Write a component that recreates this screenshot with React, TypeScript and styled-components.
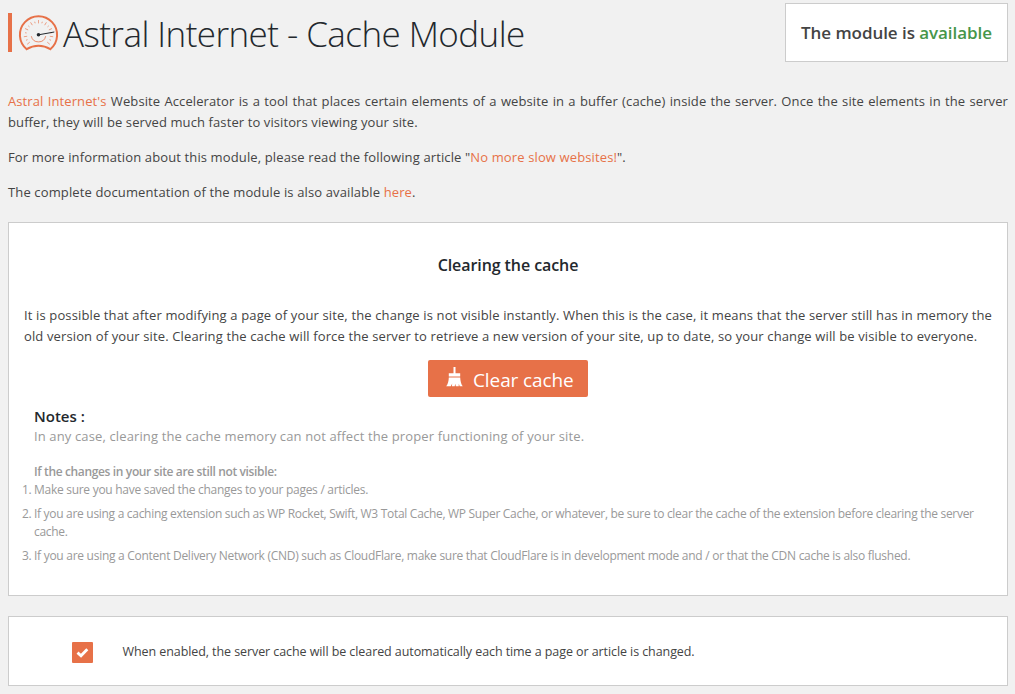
import React from "react";
import styled, { createGlobalStyle } from "styled-components";

const accent = "#e77148";

const GlobalStyle = createGlobalStyle`
  * { box-sizing: border-box; }
  body {
    margin: 0;
    background: #f1f1f1;
    color: #444;
    font-family: "Open Sans", "Noto Sans", sans-serif;
    font-size: 13px;
    line-height: 21px;
    overflow: hidden;
  }
  p, h1, h2, h3, ol { margin: 0; }
`;

const Page = styled.main`
  padding: 3px 7px 0 8px;
`;

const Header = styled.header`
  display: flex;
  justify-content: space-between;
  align-items: flex-start;
  height: 88px;
`;

const Brand = styled.div`
  display: flex;
  align-items: center;
  margin-top: 10px;
  height: 39px;
  border-left: 4px solid ${accent};
  padding-left: 6px;
`;

const Title = styled.h1`
  margin: 3px 0 0 4px;
  font-size: 35px;
  font-weight: 300;
  line-height: 40px;
  letter-spacing: -0.56px;
  color: #23282d;
  white-space: nowrap;
`;

const Status = styled.div`
  width: 223px;
  height: 59px;
  border: 1px solid #ccc;
  background: #fff;
  font-size: 17px;
  font-weight: 600;
  line-height: 57px;
  letter-spacing: -0.06px;
  text-align: center;
  white-space: nowrap;
`;

const Available = styled.span`
  color: #46964a;
`;

const Link = styled.a`
  color: ${accent};
`;

const Intro = styled.section`
  display: flex;
  flex-direction: column;
  gap: 14px;
`;

const Line = styled.span<{ $spacing?: number; $justify?: boolean }>`
  display: block;
  white-space: ${(p) => (p.$justify ? "normal" : "nowrap")};
  text-align-last: ${(p) => (p.$justify ? "justify" : "left")};
  letter-spacing: ${(p) => p.$spacing ?? 0}px;
`;

const Card = styled.section`
  border: 1px solid #ccc;
  background: #fff;
`;

const CachePanel = styled(Card)`
  display: flex;
  flex-direction: column;
  height: 374px;
  margin-top: 19px;
  padding: 32px 15px 0;
`;

const PanelTitle = styled.h2`
  margin-bottom: 29px;
  font-size: 16px;
  font-weight: 600;
  line-height: 21px;
  letter-spacing: -0.08px;
  color: #23282d;
  text-align: center;
`;

const ClearButton = styled.button`
  display: flex;
  align-items: center;
  align-self: center;
  width: 160px;
  height: 37px;
  margin-top: 13px;
  padding: 2px 0 0 18px;
  border: 0;
  border-radius: 2px;
  background: ${accent};
  color: #fff;
  font-family: inherit;
  font-size: 19px;
  line-height: 34px;
  letter-spacing: -0.1px;
  white-space: nowrap;

  svg {
    margin-bottom: 5px;
  }
`;

const ButtonLabel = styled.span`
  margin-left: 10px;
`;

const Notes = styled.div`
  margin: 9px 0 0 10px;
  color: #999;
`;

const NotesTitle = styled.h3`
  font-size: 15px;
  font-weight: 600;
  line-height: 20px;
  color: #23282d;
`;

const NotesHint = styled.p`
  margin-top: 15px;
  font-size: 12px;
  font-weight: 600;
  line-height: 19px;
`;

const Steps = styled.ol`
  display: flex;
  flex-direction: column;
  gap: 6px;
  padding: 0;
  list-style: none;
  font-size: 12px;
  line-height: 18px;
`;

const Step = styled.li`
  display: flex;
  margin-left: -12px;
`;

const StepNumber = styled.span`
  flex: none;
  width: 12px;
  letter-spacing: -0.4px;
`;

const OptionPanel = styled(Card)`
  display: flex;
  align-items: center;
  height: 70px;
  margin-top: 20px;
  padding-left: 63px;
  font-size: 12.5px;
`;

const Checkbox = styled.span`
  display: flex;
  align-items: center;
  justify-content: center;
  width: 21px;
  height: 21px;
  margin: 3px 29.5px 0 0;
  border-radius: 1px;
  background: ${accent};
`;

const ticks = Array.from({ length: 17 }, (_, i) => -130 + i * 16.25);

function Gauge() {
  return (
    <svg width="41" height="42" viewBox="0 -2 41 42" fill="none">
      <path
        d="M8.7 35.2A18.6 18.6 0 1 1 32.3 35.2C25 30.6 16 30.6 8.7 35.2Z"
        stroke={accent}
        strokeWidth="2"
        strokeLinejoin="miter"
      />
      {ticks.map((a, i) => (
        <path
          key={a}
          d={i % 2 ? "M20.5 7.2v1.6" : "M20.5 6v3.4"}
          stroke={accent}
          strokeWidth=".8"
          opacity=".75"
          transform={`rotate(${a} 20.5 20.8)`}
        />
      ))}
      <path d="M13.3 22.2A7.4 7.4 0 0 0 27.7 22.2" stroke={accent} strokeWidth="1" opacity=".8" />
      <path d="M20.5 20.8 36.3 18" stroke="#23282d" strokeWidth="1" />
      <circle cx="20.5" cy="20.8" r="1.8" fill="#23282d" />
    </svg>
  );
}

function Brush() {
  return (
    <svg width="17" height="20" viewBox="0 0 17 20" fill="#fff">
      <path d="M7.5 0h2v6.2h4.7v3.3H2.8V6.2h4.7Z" />
      <path d="M2.8 10.4h11.4c.2 3.6.8 6.3 2.5 8.8h-3l-.9-2.5-.1 2.5H9.8l-.5-2.5-.6 2.5H5.9l.3-2.8-1.4 2.8H.2c1.8-2.5 2.5-5.2 2.6-8.8Z" />
    </svg>
  );
}

export default function App() {
  return (
    <>
      <GlobalStyle />
      <Page>
        <Header>
          <Brand>
            <Gauge />
            <Title>Astral Internet - Cache Module</Title>
          </Brand>
          <Status>
            The module is <Available>available</Available>
          </Status>
        </Header>

        <Intro>
          <p>
            <Line $justify $spacing={0.1}>
              <Link>Astral Internet's</Link> Website Accelerator is a tool that places certain elements of a website in a buffer (cache) inside the server. Once the site elements in the server
            </Line>
            <Line $spacing={0.1}>buffer, they will be served much faster to visitors viewing your site.</Line>
          </p>
          <p>
            <Line $spacing={0.125}>
              For more information about this module, please read the following article "<Link>No more slow websites!</Link>".
            </Line>
          </p>
          <p>
            <Line $spacing={0.13}>
              The complete documentation of the module is also available <Link>here</Link>.
            </Line>
          </p>
        </Intro>

        <CachePanel>
          <PanelTitle>Clearing the cache</PanelTitle>
          <p>
            <Line $justify $spacing={0.12}>
              It is possible that after modifying a page of your site, the change is not visible instantly. When this is the case, it means that the server still has in memory the
            </Line>
            <Line $spacing={0.127}>
              old version of your site. Clearing the cache will force the server to retrieve a new version of your site, up to date, so your change will be visible to everyone.
            </Line>
          </p>
          <ClearButton>
            <Brush />
            <ButtonLabel>Clear cache</ButtonLabel>
          </ClearButton>
          <Notes>
            <NotesTitle>Notes :</NotesTitle>
            <Line $spacing={0.13}>
              In any case, clearing the cache memory can not affect the proper functioning of your site.
            </Line>
            <NotesHint>
              <Line $spacing={-0.36}>If the changes in your site are still not visible:</Line>
            </NotesHint>
            <Steps>
              <Step>
                <StepNumber>1.</StepNumber>
                <Line $spacing={-0.28}>Make sure you have saved the changes to your pages / articles.</Line>
              </Step>
              <Step>
                <StepNumber>2.</StepNumber>
                <div>
                  <Line $spacing={-0.3}>
                    If you are using a caching extension such as WP Rocket, Swift, W3 Total Cache, WP Super Cache, or whatever, be sure to clear the cache of the extension before clearing the server
                  </Line>
                  <Line $spacing={-0.3}>cache.</Line>
                </div>
              </Step>
              <Step>
                <StepNumber>3.</StepNumber>
                <Line $spacing={-0.276}>
                  If you are using a Content Delivery Network (CND) such as CloudFlare, make sure that CloudFlare is in development mode and / or that the CDN cache is also flushed.
                </Line>
              </Step>
            </Steps>
          </Notes>
        </CachePanel>

        <OptionPanel>
          <Checkbox>
            <svg width="13" height="11" viewBox="0 0 13 11" fill="none">
              <path d="M1.5 5.6 5 8.8 11.3 2.2" stroke="#fff" strokeWidth="2.8" />
            </svg>
          </Checkbox>
          <Line $spacing={-0.08}>
            When enabled, the server cache will be cleared automatically each time a page or article is changed.
          </Line>
        </OptionPanel>
      </Page>
    </>
  );
}
